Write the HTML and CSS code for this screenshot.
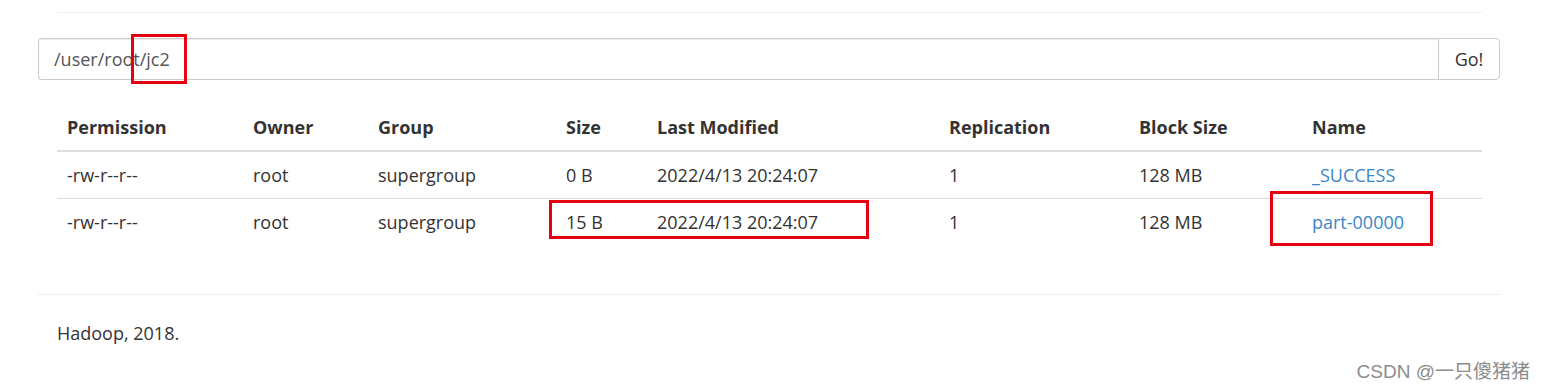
FILE: index.html
```html
<!DOCTYPE html>
<html lang="en">
<head>
    <meta charset="UTF-8">
    <title>Browse Directory</title>
    <link rel="stylesheet" href="styles.css">
</head>
<body>
    <div class="page">
        <hr class="top-rule">

        <div class="path-bar">
            <input class="path-input" type="text" value="/user/root/jc2">
            <button class="go-btn">Go!</button>
            <div class="mark mark-path"></div>
        </div>

        <div class="table-wrap">
            <table class="listing">
                <thead>
                    <tr>
                        <th class="c-perm">Permission</th>
                        <th class="c-owner">Owner</th>
                        <th class="c-group">Group</th>
                        <th class="c-size">Size</th>
                        <th class="c-mod">Last Modified</th>
                        <th class="c-rep">Replication</th>
                        <th class="c-block">Block Size</th>
                        <th class="c-name">Name</th>
                    </tr>
                </thead>
                <tbody>
                    <tr>
                        <td>-rw-r--r--</td>
                        <td>root</td>
                        <td>supergroup</td>
                        <td>0 B</td>
                        <td>2022/4/13 20:24:07</td>
                        <td>1</td>
                        <td>128 MB</td>
                        <td><a href="#">_SUCCESS</a></td>
                    </tr>
                    <tr>
                        <td>-rw-r--r--</td>
                        <td>root</td>
                        <td>supergroup</td>
                        <td>15 B</td>
                        <td>2022/4/13 20:24:07</td>
                        <td>1</td>
                        <td>128 MB</td>
                        <td><a href="#">part-00000</a></td>
                    </tr>
                </tbody>
            </table>
            <div class="mark mark-row"></div>
            <div class="mark mark-name"></div>
        </div>

        <hr class="foot-rule">
        <footer class="foot">Hadoop, 2018.</footer>
    </div>
    <div class="watermark">CSDN @一只傻猪猪</div>
</body>
</html>
```

FILE: styles.css
```css
body {
    margin: 0;
    font-family: "Open Sans", "Noto Sans", Arial, sans-serif;
    font-size: 18px;
    line-height: 26px;
    color: #333;
    background: #fff;
}

.page {
    padding: 0 46px 0 38px;
}

hr {
    border: 0;
    border-top: 1px solid #eee;
    margin: 0;
}

.top-rule {
    margin: 12px 18px 0 19px;
}

.path-bar {
    position: relative;
    display: flex;
    margin-top: 25px;
    height: 42px;
}

.path-input {
    flex: 1;
    min-width: 0;
    box-sizing: border-box;
    height: 42px;
    padding: 0 15px;
    font: inherit;
    color: #555;
    border: 1px solid #ccc;
    border-right: 0;
    border-radius: 4px 0 0 4px;
    box-shadow: inset 0 1px 1px rgba(0,0,0,0.075);
    outline: none;
}

.go-btn {
    width: 62px;
    height: 42px;
    font: inherit;
    color: #333;
    background: #fff;
    border: 1px solid #ccc;
    border-radius: 0 4px 4px 0;
    padding: 0;
}

.mark {
    position: absolute;
    border: 3px solid #e60012;
    box-sizing: border-box;
}

.mark-path {
    left: 93px;
    top: -4px;
    width: 56px;
    height: 50px;
}

.table-wrap {
    position: relative;
    margin: 24px 18px 0 19px;
}

.listing {
    width: 100%;
    border-collapse: collapse;
    table-layout: fixed;
}

.listing th,
.listing td {
    padding: 10px 10px;
    text-align: left;
    white-space: nowrap;
}

.listing th {
    font-weight: bold;
    border-bottom: 2px solid #ddd;
}

.listing tbody tr:first-child td {
    border-bottom: 1px solid #ddd;
}

.c-perm { width: 166px; }
.c-owner { width: 105px; }
.c-group { width: 168px; }
.c-size { width: 71px; }
.c-mod { width: 272px; }
.c-rep { width: 170px; }
.c-block { width: 153px; }

.listing a {
    color: #3a86c6;
    text-decoration: none;
}

.mark-row {
    left: 492px;
    top: 96px;
    width: 320px;
    height: 39px;
}

.mark-name {
    left: 1213px;
    top: 87px;
    width: 163px;
    height: 55px;
}

.foot-rule {
    margin-top: 49px;
}

.foot {
    padding: 25px 19px;
}

.watermark {
    position: absolute;
    right: 16px;
    top: 359px;
    font-family: Arial, "Noto Sans CJK SC", sans-serif;
    font-size: 19px;
    color: #8c8c8c;
}
```
